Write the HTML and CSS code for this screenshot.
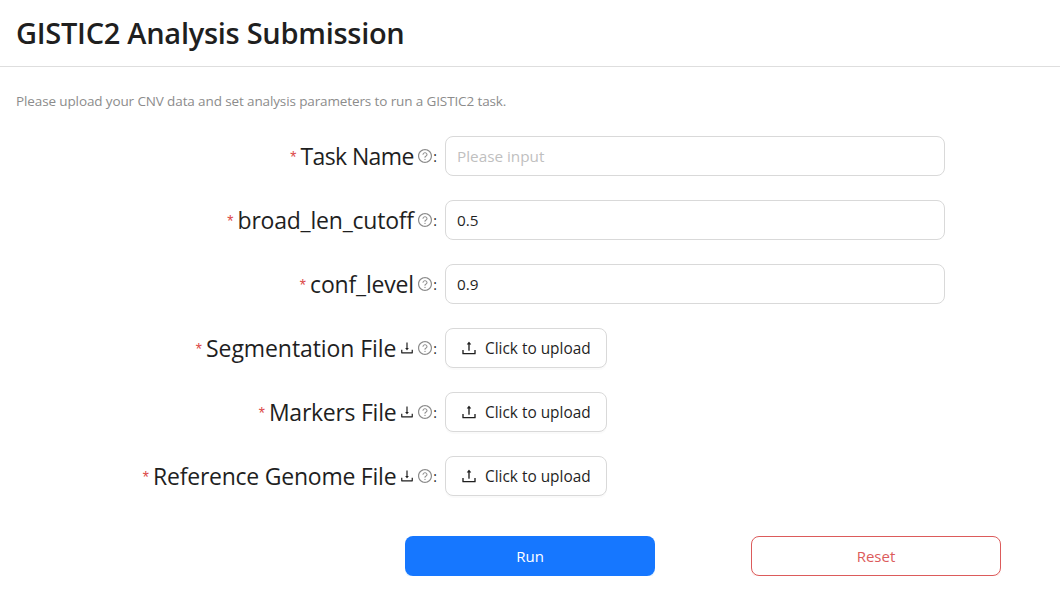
FILE: index.html
```html
<!DOCTYPE html>
<html lang="en">
<head>
<meta charset="utf-8">
<title>GISTIC2 Analysis Submission</title>
<link rel="stylesheet" href="styles.css">
</head>
<body>
<svg class="sprite" aria-hidden="true">
  <symbol id="help" viewBox="64 64 896 896"><path d="M512 64C264.6 64 64 264.6 64 512s200.6 448 448 448 448-200.600 448-448S759.400 64 512 64zm0 820c-205.400 0-372-166.600-372-372s166.600-372 372-372 372 166.600 372 372-166.600 372-372 372z"/><path d="M623.600 316.700C593.600 290.400 554 276 512 276s-81.600 14.500-111.600 40.700C369.200 344 352 380.700 352 420v7.600c0 4.400 3.600 8 8 8h48c4.400 0 8-3.600 8-8V420c0-44.100 43.100-80 96-80s96 35.900 96 80c0 31.100-22 59.600-56.100 72.700-21.200 8.100-39.200 22.300-52.100 40.900-13.100 19-19.900 41.800-19.900 64.900V620c0 4.400 3.600 8 8 8h48c4.400 0 8-3.600 8-8v-22.700a48.300 48.300 0 0130.900-44.800c59-22.700 97.100-74.700 97.100-132.500.1-39.300-17.100-76-48.300-103.300zM472 732a40 40 0 1080 0 40 40 0 10-80 0z"/></symbol>
  <symbol id="download" viewBox="64 64 896 896"><path d="M505.700 661a8 8 0 0012.600 0l112-141.700c4.100-5.200.4-12.900-6.300-12.900h-74.100V168c0-4.400-3.600-8-8-8h-60c-4.400 0-8 3.600-8 8v338.300H400c-6.700 0-10.400 7.700-6.300 12.900l112 141.800zM878 626h-60c-4.400 0-8 3.600-8 8v154H214V634c0-4.400-3.600-8-8-8h-60c-4.400 0-8 3.600-8 8v198c0 17.700 14.300 32 32 32h684c17.700 0 32-14.300 32-32V634c0-4.400-3.600-8-8-8z"/></symbol>
  <symbol id="upload" viewBox="64 64 896 896"><path d="M400 317.700h73.900V656c0 4.400 3.600 8 8 8h60c4.400 0 8-3.600 8-8V317.700H624c6.700 0 10.400-7.700 6.300-12.900L518.300 163a8 8 0 00-12.600 0l-112 141.700c-4.100 5.300-.4 13 6.300 13zM878 626h-60c-4.400 0-8 3.600-8 8v154H214V634c0-4.400-3.600-8-8-8h-60c-4.400 0-8 3.600-8 8v198c0 17.700 14.300 32 32 32h684c17.700 0 32-14.300 32-32V634c0-4.400-3.600-8-8-8z"/></symbol>
</svg>
<header class="header"><h1 class="title">GISTIC2 Analysis Submission</h1></header>
<main class="main">
  <p class="desc">Please upload your CNV data and set analysis parameters to run a GISTIC2 task.</p>
  <form class="form">
    <div class="row">
      <label class="label"><span class="star">*</span><span class="name name-task">Task Name</span><svg class="help"><use href="#help"/></svg><span class="colon">:</span></label>
      <input class="input" type="text" placeholder="Please input">
    </div>
    <div class="row">
      <label class="label"><span class="star">*</span><span class="name name-broad">broad_len_cutoff</span><svg class="help"><use href="#help"/></svg><span class="colon">:</span></label>
      <input class="input" type="text" value="0.5">
    </div>
    <div class="row">
      <label class="label"><span class="star">*</span><span class="name name-conf">conf_level</span><svg class="help"><use href="#help"/></svg><span class="colon">:</span></label>
      <input class="input" type="text" value="0.9">
    </div>
    <div class="row">
      <label class="label"><span class="star">*</span><span class="name name-seg">Segmentation File</span><svg class="download"><use href="#download"/></svg><svg class="help"><use href="#help"/></svg><span class="colon">:</span></label>
      <button class="upload" type="button"><svg class="upload-icon"><use href="#upload"/></svg><span>Click to upload</span></button>
    </div>
    <div class="row">
      <label class="label"><span class="star">*</span><span class="name name-markers">Markers File</span><svg class="download"><use href="#download"/></svg><svg class="help"><use href="#help"/></svg><span class="colon">:</span></label>
      <button class="upload" type="button"><svg class="upload-icon"><use href="#upload"/></svg><span>Click to upload</span></button>
    </div>
    <div class="row">
      <label class="label"><span class="star">*</span><span class="name name-genome">Reference Genome File</span><svg class="download"><use href="#download"/></svg><svg class="help"><use href="#help"/></svg><span class="colon">:</span></label>
      <button class="upload" type="button"><svg class="upload-icon"><use href="#upload"/></svg><span>Click to upload</span></button>
    </div>
    <div class="actions">
      <button class="action run" type="button">Run</button>
      <button class="action reset" type="button">Reset</button>
    </div>
  </form>
</main>
</body>
</html>
```
FILE: styles.css
```css
* { box-sizing: border-box; }
body { margin: 0; background: #fff; color: #1f1f1f; font-family: "Open Sans", "Noto Sans", sans-serif; overflow: hidden; }
.sprite { display: none; }
svg { fill: currentColor; flex: none; }
.header { height: 67px; padding: 0 16px; border-bottom: 1px solid #dedede; display: flex; align-items: center; }
.title { margin: 0; font-size: 29px; line-height: 40px; font-weight: 600; white-space: nowrap; letter-spacing: -0.28px; }
.main { padding: 23px 16px 0; }
.desc { margin: 0; font-size: 13.5px; line-height: 22px; color: #8c8c8c; letter-spacing: -0.12px; white-space: nowrap; }
.form { margin-top: 24px; display: flex; flex-direction: column; gap: 24px; }
.row { display: flex; height: 40px; }
.label { width: 429px; padding-right: 8px; display: flex; align-items: center; justify-content: flex-end; white-space: nowrap; }
.star { color: #dc4b4b; font: 16px "Liberation Mono", monospace; width: 8px; margin-right: 4px; padding-top: 6px; }
.name { font-size: 23px; line-height: 40px; }
.name-task { letter-spacing: -0.6px; }
.name-broad { letter-spacing: -0.22px; }
.name-conf { letter-spacing: -0.2px; }
.name-seg { letter-spacing: -0.08px; }
.name-markers { letter-spacing: -0.27px; }
.name-genome { letter-spacing: -0.24px; }
.help { width: 14px; height: 14px; margin-left: 4.5px; color: #8c8c8c; }
.download { width: 14px; height: 14px; margin-left: 4px; }
.download + .help { margin-left: 4px; }
.colon { font-size: 14px; margin-left: 1px; }
.input { width: 500px; height: 40px; border: 1px solid #d9d9d9; border-radius: 8px; padding: 0 11px; font: 15.300px "Open Sans", sans-serif; color: #1f1f1f; outline: none; }
.input::placeholder { color: #bfbfbf; }
.upload { width: 162px; height: 40px; border: 1px solid #d9d9d9; border-radius: 8px; background: #fff; box-shadow: 0 2px 0 rgba(0,0,0,.02); display: flex; align-items: center; gap: 8px; padding: 0 15px; font: 15.400px "Open Sans", sans-serif; color: #1f1f1f; white-space: nowrap; }
.upload-icon { width: 16px; height: 16px; }
.upload span { padding-top: 1px; }
.actions { display: flex; gap: 96px; margin: 16px 0 0 389px; }
.action { width: 250px; height: 40px; border-radius: 8px; font: 15px "Open Sans", sans-serif; }
.run { border: 0; background: #1677ff; color: #fff; box-shadow: 0 2px 0 rgba(5,145,255,.1); }
.reset { border: 1px solid #dc5b5b; background: #fff; color: #dc5b5b; box-shadow: 0 2px 0 rgba(255,38,5,.06); }
```
